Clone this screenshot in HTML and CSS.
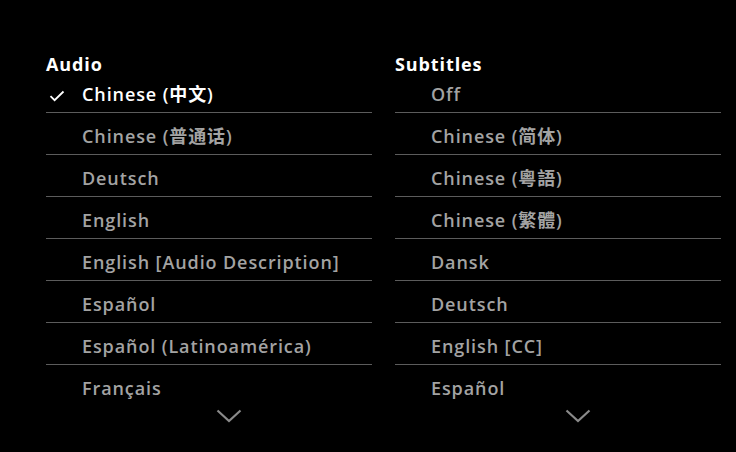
FILE: index.html
```html
<!DOCTYPE html>
<html>
<head>
<meta charset="utf-8">
<link rel="stylesheet" href="styles.css">
</head>
<body>
<div class="panel">
  <section class="col">
    <h2 class="heading">Audio</h2>
    <ul class="list">
      <li class="item selected"><svg class="check" width="16" height="12" viewBox="0 0 16 12"><path d="M1.5 6.2 L5.6 10.2 L14.5 1.5" fill="none" stroke="#fff" stroke-width="1.8"/></svg>Chinese (中文)</li>
      <li class="item">Chinese (普通话)</li>
      <li class="item">Deutsch</li>
      <li class="item">English</li>
      <li class="item">English [Audio Description]</li>
      <li class="item">Español</li>
      <li class="item">Español (Latinoamérica)</li>
      <li class="item">Français</li>
    </ul>
    <div class="more"><svg width="26" height="14" viewBox="0 0 26 14"><path d="M1.5 1.5 L13 12 L24.5 1.5" fill="none" stroke="#8a8a8a" stroke-width="2.2"/></svg></div>
  </section>
  <section class="col">
    <h2 class="heading">Subtitles</h2>
    <ul class="list">
      <li class="item">Off</li>
      <li class="item">Chinese (简体)</li>
      <li class="item">Chinese (粵語)</li>
      <li class="item">Chinese (繁體)</li>
      <li class="item">Dansk</li>
      <li class="item">Deutsch</li>
      <li class="item">English [CC]</li>
      <li class="item">Español</li>
    </ul>
    <div class="more"><svg width="26" height="14" viewBox="0 0 26 14"><path d="M1.5 1.5 L13 12 L24.5 1.5" fill="none" stroke="#8a8a8a" stroke-width="2.2"/></svg></div>
  </section>
</div>
</body>
</html>
```
FILE: styles.css
```css
html, body {
  margin: 0;
  padding: 0;
  background: #000;
  width: 736px;
  height: 452px;
  overflow: hidden;
}
.panel {
  display: flex;
  gap: 23px;
  padding: 57px 0 0 46px;
  font-family: "Open Sans", "Noto Sans CJK SC", sans-serif;
}
.col {
  width: 326px;
  display: flex;
  flex-direction: column;
}
.heading {
  margin: 0;
  font-size: 18px;
  font-weight: 700;
  line-height: 14px;
  letter-spacing: 0.9px;
  color: #fff;
}
.list {
  list-style: none;
  margin: 0;
  padding: 0;
}
.item {
  position: relative;
  padding: 6px 0 0 36px;
  box-sizing: border-box;
  height: 42px;
  line-height: 35px;
  font-size: 18px;
  font-weight: 600;
  letter-spacing: 0.9px;
  color: #a3a3a3;
  border-bottom: 1px solid #5c5c5c;
}
.item:last-child {
  border-bottom: none;
}
.item.selected {
  color: #fff;
}
.check {
  position: absolute;
  left: 3px;
  top: 19px;
}
.more {
  display: flex;
  justify-content: center;
  padding-left: 39px;
  margin-top: 2px;
}
```
